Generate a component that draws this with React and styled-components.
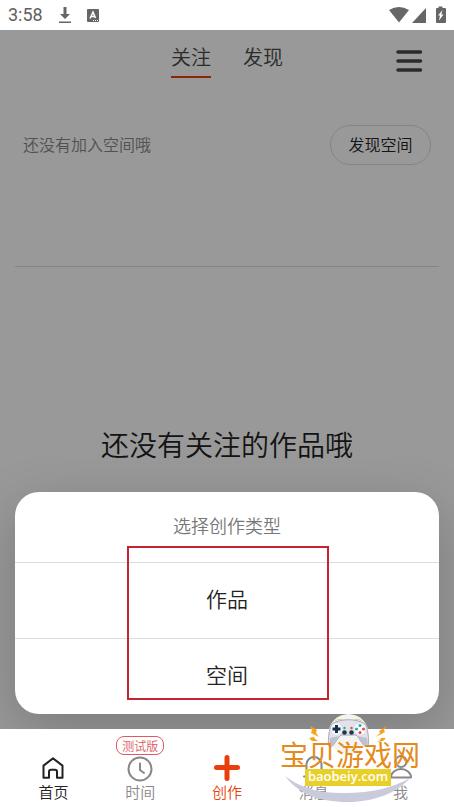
import React, { useState } from 'react';
import styled, { createGlobalStyle } from 'styled-components';

const navItems = [
  { id: 'home', label: '首页', color: '#222' },
  { id: 'time', label: '时间', color: '#888', badge: '测试版' },
  { id: 'create', label: '创作', color: '#e8400c' },
  { id: 'message', label: '消息', color: '#888' },
  { id: 'me', label: '我', color: '#888' },
];

const NavIcon = ({ id }) => {
  const props = {
    width: 28,
    height: 28,
    viewBox: '0 0 28 28',
    fill: 'none',
    stroke: 'currentColor',
    strokeWidth: 2,
    strokeLinecap: 'round',
    strokeLinejoin: 'round',
    'aria-hidden': true,
  };

  switch (id) {
    case 'home':
      return (
        <svg {...props}>
          <path d="M4.500 10.600 14 3.400l9.500 7.200v12.200h-5.500v-6a2 2 0 0 0-2-2h-4a2 2 0 0 0-2 2v6H4.500z" />
        </svg>
      );
    case 'time':
      return (
        <svg {...props}>
          <circle cx="14" cy="14" r="11.500" />
          <path d="M14 8.500v6.500l4 3" />
        </svg>
      );
    case 'create':
      return (
        <svg {...props} strokeWidth={5}>
          <path d="M14 2.500v21M3.500 12.500h21" />
        </svg>
      );
    case 'message':
      return (
        <svg {...props}>
          <path d="M6.500 21V9.500a7.500 7.500 0 0 1 15 0V21M4 21.500h20M11.500 24.500h5" />
        </svg>
      );
    default:
      return (
        <svg {...props}>
          <circle cx="14" cy="6.500" r="5.500" />
          <path d="M4 22.500a10 8.500 0 0 1 20 0z" />
        </svg>
      );
  }
};

const StatusIcons = () => (
  <svg width="60" height="20" viewBox="387 5 60 20" fill="#666" aria-hidden="true">
    <path d="M389 10q10-6 20 0l-10 12.500z" />
    <path d="M426 8v15h-14z" />
    <path fillRule="evenodd" d="M438.500 6.500h4V8h2.500q1 0 1 1v13q0 1-1 1h-8q-1 0-1-1V9q0-1 1-1h1.500zM442.500 10l-4.500 5.500h2l-1 5 4.500-6h-2.200z" />
  </svg>
);

const Watermark = () => (
  <WatermarkSvg viewBox="280 710 140 97" role="img" aria-label="宝贝游戏网 baobeiy.com">
    <path
      d="M285 776c18 13 34 17 59 17 29 0 50-6 66-15-13 15-36 24-62 24-31 0-50-9-63-26z"
      fill="#c9cbdc"
    />
    <circle cx="348.500" cy="734" r="20" fill="#f3f3f0" />
    <path
      d="M336 722c7-3 18-3 25 0 5 1 6 5 7 12 1 8 1 12-1 13-4 0-7-9-11-12h-15c-4 3-7 12-11 12-2-1-2-5-1-13 1-7 2-11 7-12z"
      fill="#e2e3ea"
      stroke="#a6a8b8"
      strokeWidth="1"
    />
    <path d="M330 738c-1 6-1 8 0 9 4 0 6-8 9-11zM367 738c1 6 1 8 0 9-4 0-6-8-9-11z" fill="#bfc1d0" />
    <path d="M335 721c3-2 6-2 8-1M354 720c2-1 5-1 8 1" stroke="#e3c98a" fill="none" />
    <circle cx="336.500" cy="729" r="5.500" fill="#f7f7fa" />
    <circle cx="360" cy="729" r="5.500" fill="#fff" />
    <path d="M336.500 725v8M332.500 729h8" stroke="#17324b" strokeWidth="3" />
    <circle cx="360" cy="725.500" r="1.500" fill="#28a6b0" />
    <circle cx="360" cy="732.500" r="1.500" fill="#e14841" />
    <circle cx="356.500" cy="729" r="1.500" fill="#28a6b0" />
    <circle cx="363.500" cy="729" r="1.500" fill="#e14841" />
    <circle cx="344.500" cy="732.500" r="2.300" fill="#20364b" />
    <circle cx="351.500" cy="732.500" r="2.300" fill="#20364b" />
    <circle cx="344.500" cy="728" r="1.200" fill="#28a6b0" />
    <circle cx="351.500" cy="728" r="1.200" fill="#e14841" />
    <g fill="#f4a51c">
      <path d="M310 726l7 4-1 3 3 4-8-4 1-3z" />
      <path d="M309 738l5-1 1 2 3 2-6 0z" />
      <path d="M387 726l-8 5 1 2-4 4 9-5-1-2z" />
      <path d="M386 738l-5 0-1 2-3 2 6-1z" />
    </g>
    <WatermarkName x="280" y="766">宝贝游戏网</WatermarkName>
    <rect x="305" y="769" width="86" height="17" fill="#e9d028" />
    <WatermarkUrl x="348" y="781" textAnchor="middle">baobeiy.com</WatermarkUrl>
  </WatermarkSvg>
);

const App = () => {
  const [tab, setTab] = useState('关注');

  return (
    <Page>
      <GlobalStyle />
      <StatusBar>
        <Clock>3:58</Clock>
        <svg width="14" height="18" viewBox="0 0 14 18" fill="#666" aria-hidden="true">
          <path d="M5.500 1h3v7h3.500l-5 5-5-5h3.500zM1 15.500h12V17H1z" />
        </svg>
        <AppMark viewBox="0 0 12 13" aria-hidden="true">
          <rect width="12" height="13" rx="1" fill="#666" />
          <path d="M3 9.500 6 3l2.500 6M4 7.500h4" fill="none" stroke="#fff" strokeWidth="1.500" />
          <path d="M6 11.500h1m1 0h1m1 0h1" stroke="#fff" />
        </AppMark>
        <StatusIcons />
      </StatusBar>

      <Main>
        <Header>
          <span />
          <Tabs>
            {['关注', '发现'].map((name) => (
              <Tab key={name} type="button" $active={tab === name} onClick={() => setTab(name)}>
                {name}
              </Tab>
            ))}
          </Tabs>
          <MenuButton type="button" aria-label="菜单">
            <svg width="28" height="24" viewBox="0 0 28 24" stroke="#484848" strokeWidth="3.500" strokeLinecap="round">
              <path d="M3 3h22.500M3 12h22.500M3 21h22.500" />
            </svg>
          </MenuButton>
        </Header>
        <SpaceRow>
          <Hint>还没有加入空间哦</Hint>
          <SpaceButton type="button">发现空间</SpaceButton>
        </SpaceRow>
        <EmptyText>还没有关注的作品哦</EmptyText>

        <Scrim />
        <Sheet role="dialog" aria-labelledby="sheet-title">
          <SheetTitle id="sheet-title">选择创作类型</SheetTitle>
          <SheetItem type="button">作品</SheetItem>
          <SheetItem type="button">空间</SheetItem>
          <Highlight />
        </Sheet>
      </Main>

      <Nav>
        {navItems.map((item) => (
          <NavButton key={item.id} type="button" $color={item.color}>
            <NavIcon id={item.id} />
            {item.label}
            {item.badge && <Badge>{item.badge}</Badge>}
          </NavButton>
        ))}
      </Nav>
      <Watermark />
    </Page>
  );
};

const GlobalStyle = createGlobalStyle`
  * {
    box-sizing: border-box;
  }

  body {
    margin: 0;
    font-family: 'Noto Sans CJK SC', sans-serif;
    font-weight: 350;
    background: #fff;
  }

  button {
    padding: 0;
    border: 0;
    background: none;
    font-family: inherit;
    font-weight: inherit;
    cursor: pointer;
  }

  svg {
    display: block;
  }
`;

const Page = styled.div`
  position: relative;
  display: flex;
  flex-direction: column;
  min-height: 100vh;
`;

const StatusBar = styled.div`
  display: flex;
  align-items: center;
  height: 30px;
  padding: 0 7px 0 8px;
`;

const Clock = styled.span`
  margin-right: 15px;
  font-family: Roboto, sans-serif;
  font-size: 18px;
  font-weight: 400;
  line-height: 30px;
  color: #5f5f5f;
`;

const AppMark = styled.svg`
  width: 12px;
  height: 13px;
  margin: 0 auto 0 15px;
`;

const Main = styled.main`
  position: relative;
  display: flex;
  flex: 1;
  flex-direction: column;
  padding: 0 15px;
  overflow: hidden;
  background: #fff;
`;

const Header = styled.header`
  display: grid;
  grid-template-columns: 1fr auto 1fr;
  align-items: center;
  height: 62px;
`;

const Tabs = styled.div`
  display: flex;
  gap: 32px;
`;

const Tab = styled.button`
  height: 34px;
  padding-bottom: 6px;
  border-bottom: 2px solid ${props => (props.$active ? '#e8400c' : 'transparent')};
  font-size: 20px;
  line-height: 26px;
  color: #484848;
`;

const MenuButton = styled.button`
  justify-self: end;
  margin-right: 16px;
`;

const SpaceRow = styled.section`
  display: flex;
  align-items: flex-start;
  justify-content: space-between;
  height: 175px;
  padding: 33px 8px 0;
  border-bottom: 1px solid #ddd;
`;

const Hint = styled.p`
  margin: 0;
  font-size: 16px;
  line-height: 38px;
  color: #888;
`;

const SpaceButton = styled.button`
  width: 101px;
  height: 40px;
  padding-bottom: 2px;
  border: 1px solid #ddd;
  border-radius: 20px;
  font-size: 16px;
  color: #222;
`;

const EmptyText = styled.p`
  margin: 157px 0 0;
  font-size: 28px;
  line-height: 40px;
  text-align: center;
  color: #222;
`;

const Scrim = styled.div`
  position: absolute;
  inset: 0;
  background: rgba(0, 0, 0, 0.4);
`;

const Sheet = styled.section`
  position: absolute;
  right: 15px;
  bottom: 15px;
  left: 15px;
  display: flex;
  flex-direction: column;
  border-radius: 24px;
  background: #fff;
  box-shadow: 0 16px 56px rgba(0, 0, 0, 0.2);
`;

const SheetTitle = styled.h2`
  margin: 0;
  padding-bottom: 4px;
  font-size: 18px;
  font-weight: inherit;
  line-height: 66px;
  text-align: center;
  color: #777;
`;

const SheetItem = styled.button`
  height: 76px;
  padding-bottom: 6px;
  border-top: 1px solid #ddd;
  font-size: 21px;
  color: #222;
`;

/* frame around the two choices */
const Highlight = styled.div`
  position: absolute;
  inset: 54px 110px 14px 112px;
  border: 2px solid #c4242f;
  pointer-events: none;
`;

const Nav = styled.nav`
  display: flex;
  height: 78px;
  padding: 0 10px;
  background: #fff;
`;

const NavButton = styled.button`
  position: relative;
  display: flex;
  flex: 1;
  flex-direction: column;
  align-items: center;
  padding-top: 26px;
  font-size: 15px;
  line-height: 18px;
  color: ${props => props.$color};
`;

const Badge = styled.span`
  position: absolute;
  top: 7px;
  left: 50%;
  width: 48px;
  border: 1px solid #dc5a60;
  border-radius: 8px;
  font-size: 12px;
  line-height: 17px;
  color: #dc5a60;
  background: #fff;
  transform: translateX(-50%);
`;

const WatermarkSvg = styled.svg`
  position: absolute;
  right: 34px;
  bottom: 0;
  width: 140px;
  height: 97px;
  pointer-events: none;
`;

const WatermarkName = styled.text`
  font-size: 28px;
  font-weight: 400;
  fill: #e58a1c;
`;

const WatermarkUrl = styled.text`
  font-family: 'Open Sans', sans-serif;
  font-size: 13px;
  font-weight: 600;
  fill: #fff;
`;

export default App;
